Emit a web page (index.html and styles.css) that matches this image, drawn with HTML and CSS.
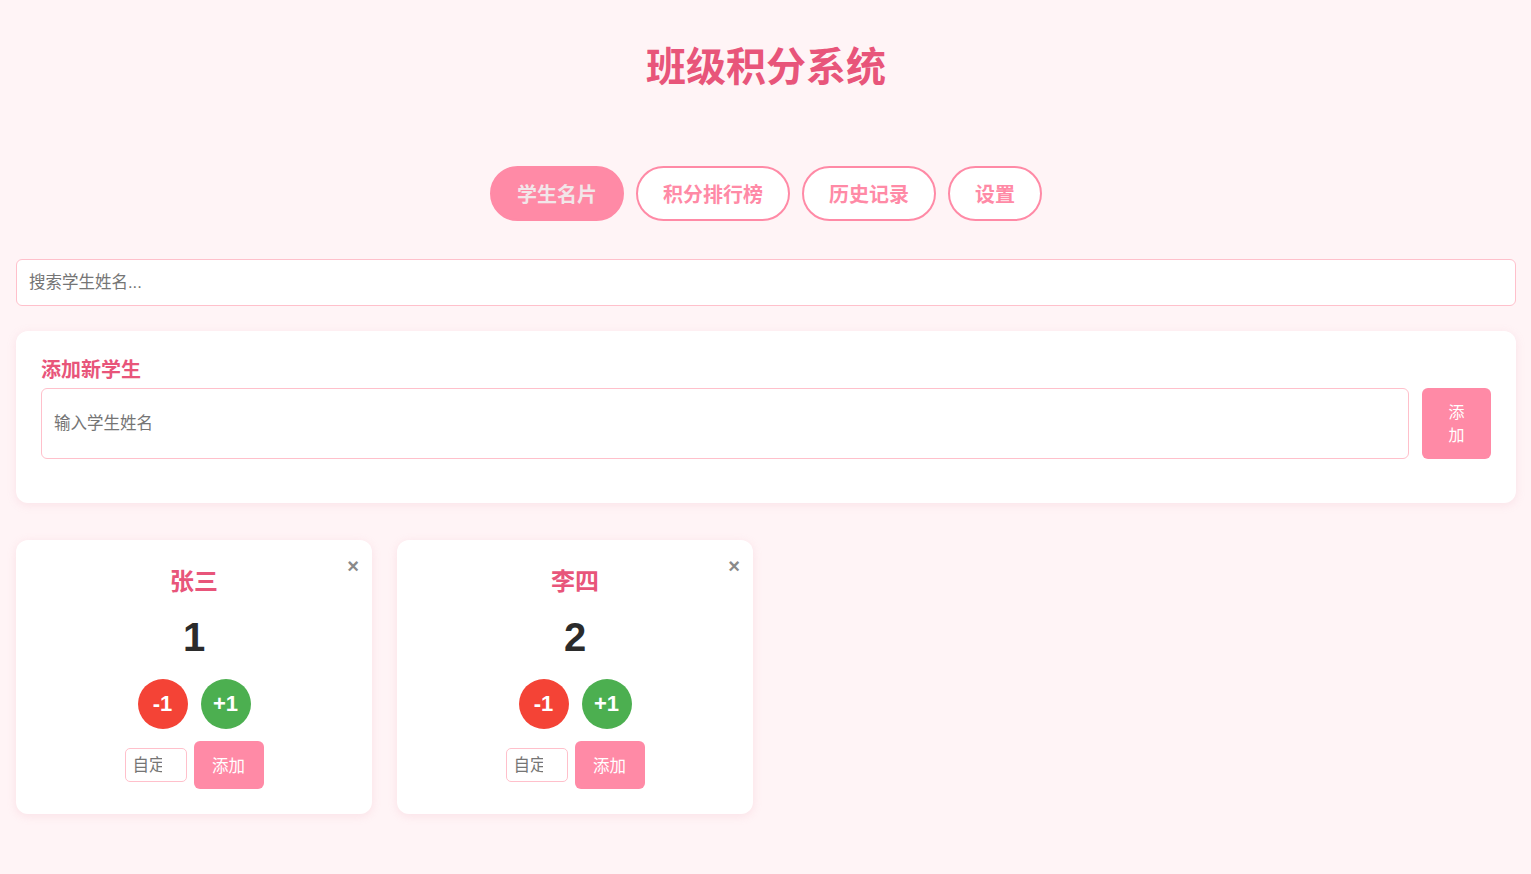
FILE: index.html
```html
<!DOCTYPE html>
<html lang="zh">
<head>
<meta charset="utf-8">
<title>班级积分系统</title>
<link rel="stylesheet" href="styles.css">
</head>
<body>
<div class="app">
  <header class="header">
    <h1 class="title">班级积分系统</h1>
  </header>
  <nav class="tabs">
    <button class="tab active">学生名片</button>
    <button class="tab">积分排行榜</button>
    <button class="tab">历史记录</button>
    <button class="tab">设置</button>
  </nav>
  <input class="search" type="text" placeholder="搜索学生姓名...">
  <section class="add-card">
    <h3 class="add-title">添加新学生</h3>
    <div class="add-row">
      <input class="add-input" type="text" placeholder="输入学生姓名">
      <button class="add-btn">添加</button>
    </div>
  </section>
  <section class="students">
    <div class="student">
      <button class="remove">×</button>
      <div class="name">张三</div>
      <div class="score">1</div>
      <div class="actions">
        <button class="circle minus">-1</button>
        <button class="circle plus">+1</button>
      </div>
      <div class="custom">
        <input class="custom-input" type="text" placeholder="自定义">
        <button class="custom-btn">添加</button>
      </div>
    </div>
    <div class="student">
      <button class="remove">×</button>
      <div class="name">李四</div>
      <div class="score">2</div>
      <div class="actions">
        <button class="circle minus">-1</button>
        <button class="circle plus">+1</button>
      </div>
      <div class="custom">
        <input class="custom-input" type="text" placeholder="自定义">
        <button class="custom-btn">添加</button>
      </div>
    </div>
  </section>
</div>
</body>
</html>
```

FILE: styles.css
```css
* { box-sizing: border-box; }
html, body { margin: 0; padding: 0; }
body {
  background: #fff4f6;
  font-family: "Liberation Sans", "Noto Sans CJK SC", sans-serif;
  color: #333;
}
.app {
  padding: 0 15px 40px 16px;
  display: flex;
  flex-direction: column;
}
.header { padding-top: 40px; text-align: center; }
.title {
  margin: 0;
  font-size: 40px;
  line-height: 54px;
  font-weight: bold;
  color: #e8557a;
}
.tabs {
  margin-top: 72px;
  display: flex;
  justify-content: center;
  gap: 12px;
}
.tab {
  font-family: inherit;
  font-size: 20px;
  font-weight: bold;
  line-height: 27px;
  padding: 14px 25px 10px;
  border: 2px solid #ff8aa6;
  border-radius: 28px;
  background: #fff;
  color: #ff8aa6;
  cursor: pointer;
}
.tab.active {
  background: #ff8aa6;
  color: #f2e6e9;
}
.search {
  margin-top: 38px;
  height: 47px;
  width: 100%;
  border: 1px solid #ffc0cb;
  border-radius: 6px;
  padding: 0 12px;
  font-family: inherit;
  font-size: 16.5px;
  background: #fff;
  outline: none;
}
.search::placeholder, .add-input::placeholder, .custom-input::placeholder { color: #757575; }
.add-card {
  margin-top: 25px;
  background: #fff;
  border-radius: 12px;
  box-shadow: 0 2px 10px rgba(230, 150, 170, 0.18);
  padding: 25px 25px 44px;
}
.add-title {
  margin: 0 0 4px;
  font-size: 20px;
  line-height: 28px;
  color: #e8557a;
}
.add-row {
  display: flex;
  gap: 13px;
}
.add-input {
  flex: 1;
  height: 71px;
  border: 1px solid #ffc0cb;
  border-radius: 6px;
  padding: 0 12px;
  font-family: inherit;
  font-size: 16.5px;
  outline: none;
}
.add-btn {
  flex: none;
  width: 69px;
  height: 71px;
  padding: 0 24px;
  border: none;
  border-radius: 6px;
  background: #ff8aa6;
  color: #fff;
  font-family: inherit;
  font-size: 16px;
  line-height: 23px;
}
.students {
  margin-top: 37px;
  display: grid;
  grid-template-columns: repeat(auto-fill, 356px);
  gap: 25px;
}
.student {
  position: relative;
  background: #fff;
  border-radius: 12px;
  box-shadow: 0 2px 10px rgba(230, 150, 170, 0.2);
  padding: 25px 20px 25px;
  display: flex;
  flex-direction: column;
  align-items: center;
}
.remove {
  position: absolute;
  top: 14px;
  right: 11px;
  border: none;
  background: none;
  color: #8a8a8a;
  font-size: 20px;
  font-weight: bold;
  line-height: 24px;
  padding: 0 2px;
  font-family: "Liberation Sans", sans-serif;
}
.name {
  font-size: 24px;
  line-height: 34px;
  font-weight: bold;
  color: #e8557a;
}
.score {
  margin-top: 14px;
  font-size: 40px;
  line-height: 48px;
  font-weight: bold;
  color: #2b2b2b;
}
.actions {
  margin-top: 18px;
  display: flex;
  gap: 13px;
}
.circle {
  width: 50px;
  height: 50px;
  border-radius: 50%;
  border: none;
  color: #fff;
  font-family: "Liberation Sans", sans-serif;
  font-size: 22px;
  font-weight: bold;
  padding: 0;
}
.minus { background: #f44336; }
.plus { background: #4caf50; }
.custom {
  margin-top: 12px;
  display: flex;
  align-items: center;
  gap: 7px;
}
.custom-input {
  width: 62px;
  height: 34px;
  border: 1px solid #ffc0cb;
  border-radius: 5px;
  padding: 0 24px 0 7px;
  font-family: inherit;
  font-size: 16.5px;
  outline: none;
}
.custom-btn {
  width: 70px;
  height: 48px;
  border: none;
  border-radius: 6px;
  background: #ff8aa6;
  color: #fff;
  font-family: inherit;
  font-size: 16.5px;
  padding: 0;
}
```
